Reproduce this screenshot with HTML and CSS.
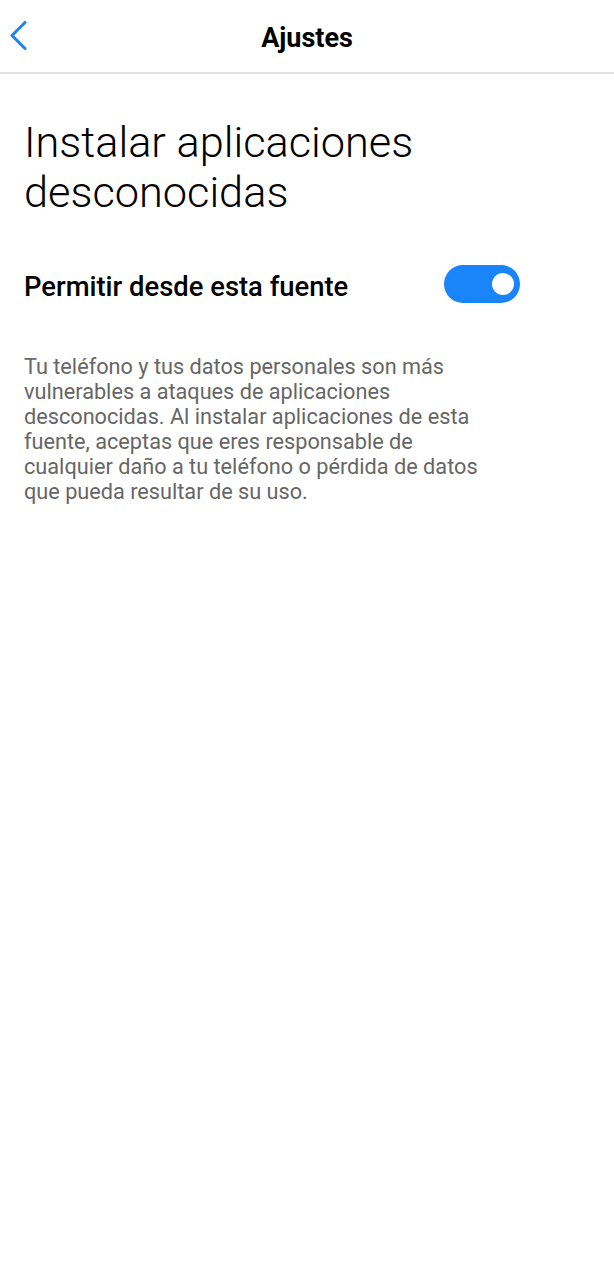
FILE: index.html
```html
<!DOCTYPE html>
<html lang="es">
<head>
<meta charset="utf-8">
<title>Ajustes</title>
<link rel="stylesheet" href="styles.css">
</head>
<body>
<header class="topbar">
  <button class="back" aria-label="Atrás">
    <svg width="20" height="32" viewBox="0 0 20 32"><polyline points="15,1.5 2,14.5 15,27.5" fill="none" stroke="#1a82f6" stroke-width="3" stroke-linecap="round" stroke-linejoin="round"/></svg>
  </button>
  <h1 class="topbar-title">Ajustes</h1>
</header>
<main class="content">
  <h2 class="page-title">Instalar aplicaciones desconocidas</h2>
  <div class="setting-row">
    <span class="setting-label">Permitir desde esta fuente</span>
    <span class="toggle" role="switch" aria-checked="true"><span class="knob"></span></span>
  </div>
  <p class="note">Tu teléfono y tus datos personales son más vulnerables a ataques de aplicaciones desconocidas. Al instalar aplicaciones de esta fuente, aceptas que eres responsable de cualquier daño a tu teléfono o pérdida de datos que pueda resultar de su uso.</p>
</main>
</body>
</html>
```
FILE: styles.css
```css
* { box-sizing: border-box; }
html, body { margin: 0; padding: 0; background: #ffffff; }
body { font-family: Roboto, "Liberation Sans", sans-serif; color: #000; }

.topbar {
  position: relative;
  height: 74px;
  border-bottom: 2px solid #e2e2e2;
  display: flex;
  align-items: center;
  justify-content: center;
}
.back {
  position: absolute;
  left: 10px;
  top: 20px;
  width: 24px;
  height: 34px;
  padding: 0;
  border: 0;
  background: none;
  display: flex;
  align-items: center;
  justify-content: flex-start;
}
.topbar-title {
  margin: 0;
  font-size: 27px;
  font-weight: 700;
  line-height: 32px;
  padding-top: 4px;
}

.content {
  padding: 44px 94px 0 24px;
}
.page-title {
  margin: 0;
  font-size: 43.3px;
  font-weight: 300;
  line-height: 50px;
}
.setting-row {
  margin-top: 47px;
  display: flex;
  align-items: center;
  justify-content: space-between;
}
.setting-label {
  font-size: 27.4px;
  font-weight: 500;
  line-height: 30px;
  padding-top: 6px;
}
.toggle {
  width: 76px;
  height: 38px;
  border-radius: 19px;
  background: #1a84f9;
  display: flex;
  align-items: center;
  justify-content: flex-end;
  padding-right: 6px;
}
.knob {
  width: 22px;
  height: 22px;
  border-radius: 50%;
  background: #ffffff;
}
.note {
  margin: 51px 0 0 0;
  max-width: 466px;
  font-size: 21.7px;
  line-height: 25px;
  color: #666666;
}
```
